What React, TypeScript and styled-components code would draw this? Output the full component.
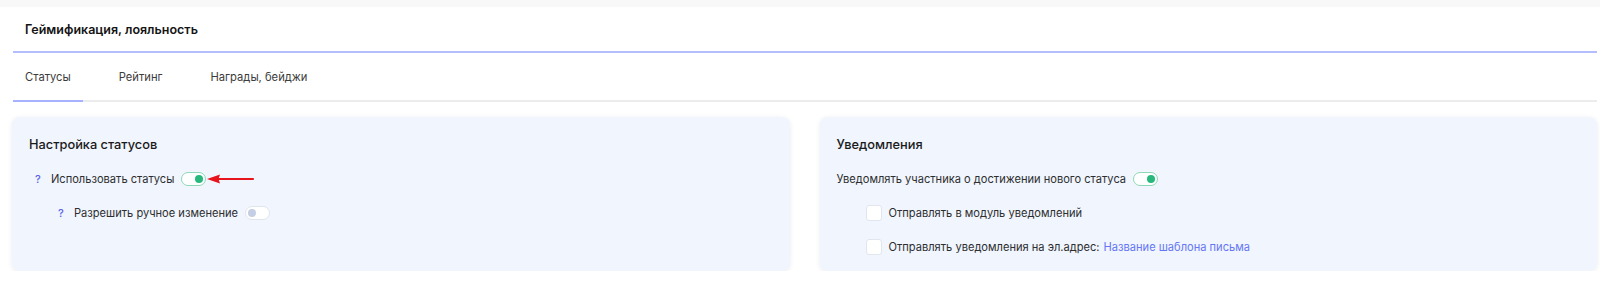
import { FC } from 'react'
import styled, { createGlobalStyle } from 'styled-components'

const GlobalStyle = createGlobalStyle`
  body {
    margin: 0;
    background: #ffffff;
    font-family: Inter, 'Noto Sans', sans-serif;
    color: #2b2b2b;
  }
`

const TopStrip = styled.div`
  height: 7px;
  background: #f8f8f9;
`

const Page = styled.div`
  padding: 0 3px 0 12px;
`

const Header = styled.div`
  height: 44px;
  display: flex;
  align-items: center;
  padding: 0 12px;
  margin-left: 1px;
  border-bottom: 2px solid #b4bdfd;
  font-size: 12.5px;
  font-weight: 600;
  color: #141414;
`

const Tabs = styled.div`
  display: flex;
  column-gap: 24px;
  margin-left: 1px;
  border-bottom: 2px solid #ececee;
`

const Tab = styled.div<{ $active?: boolean }>`
  height: 47px;
  display: flex;
  align-items: center;
  padding: 0 12px;
  margin-bottom: -2px;
  font-size: 11.2px;
  color: #3c3c3c;
  border-bottom: 2px solid ${({ $active }) => ($active ? '#a6b1ff' : 'transparent')};
`

const Cards = styled.div`
  display: grid;
  grid-template-columns: 1fr 1fr;
  column-gap: 30px;
  margin-top: 15px;
`

const Card = styled.section`
  background: #f0f5fe;
  border-radius: 8px;
  box-shadow: 0 1px 5px rgba(60, 70, 110, 0.1);
  padding: 18px 17px 14px;
  display: grid;
  align-content: start;
  row-gap: 14px;
`

const CardTitle = styled.h3`
  margin: 0;
  font-size: 12.8px;
  line-height: 20px;
  font-weight: 500;
  color: #1a1a1a;
`

const Row = styled.div<{ $indent?: number }>`
  display: flex;
  align-items: center;
  height: 20px;
  padding-left: ${({ $indent }) => $indent ?? 0}px;
  font-size: 11.1px;
  color: #2e2e2e;
`

const Hint = styled.span`
  width: 16px;
  color: #5b63e8;
  font-size: 11px;
  font-weight: 500;
`

const Toggle = styled.span<{ $on?: boolean }>`
  position: relative;
  box-sizing: border-box;
  width: 25px;
  height: 14px;
  margin-left: 7px;
  border-radius: 8px;
  background: #ffffff;
  border: 1.5px solid ${({ $on }) => ($on ? '#8dd8b6' : '#dfe5ef')};

  &::after {
    content: '';
    position: absolute;
    top: 1.5px;
    ${({ $on }) => ($on ? 'right: 2px;' : 'left: 2px;')}
    width: 8px;
    height: 8px;
    border-radius: 50%;
    background: ${({ $on }) => ($on ? '#27b87e' : '#c4cee4')};
  }
`

const Checkbox = styled.span`
  box-sizing: border-box;
  width: 16px;
  height: 16px;
  margin-right: 7px;
  border-radius: 3px;
  background: #ffffff;
  border: 1px solid #e1e5ed;
`

const TemplateLink = styled.a`
  margin-left: 4px;
  color: #6675f5;
  text-decoration: none;
`

const Arrow: FC = () => (
  <svg width="48" height="10" viewBox="0 0 48 10" style={{ marginLeft: 1 }}>
    <path d="M10 5 H46" stroke="#e8141c" strokeWidth="2.2" strokeLinecap="round" />
    <path d="M0 5 L13 0.5 L11.5 5 L13 9.5 Z" fill="#e8141c" />
  </svg>
)

const App: FC = () => (
  <>
    <GlobalStyle />
    <TopStrip />
    <Page>
      <Header>Геймификация, лояльность</Header>
      <Tabs>
        <Tab $active>Статусы</Tab>
        <Tab>Рейтинг</Tab>
        <Tab>Награды, бейджи</Tab>
      </Tabs>
      <Cards>
        <Card>
          <CardTitle>Настройка статусов</CardTitle>
          <Row $indent={6}>
            <Hint>?</Hint>
            Использовать статусы
            <Toggle $on />
            <Arrow />
          </Row>
          <Row $indent={29}>
            <Hint>?</Hint>
            Разрешить ручное изменение
            <Toggle />
          </Row>
        </Card>
        <Card>
          <CardTitle>Уведомления</CardTitle>
          <Row>
            Уведомлять участника о достижении нового статуса
            <Toggle $on />
          </Row>
          <Row $indent={29}>
            <Checkbox />
            Отправлять в модуль уведомлений
          </Row>
          <Row $indent={29}>
            <Checkbox />
            Отправлять уведомления на эл.адрес:
            <TemplateLink>Название шаблона письма</TemplateLink>
          </Row>
        </Card>
      </Cards>
    </Page>
  </>
)

export default App
